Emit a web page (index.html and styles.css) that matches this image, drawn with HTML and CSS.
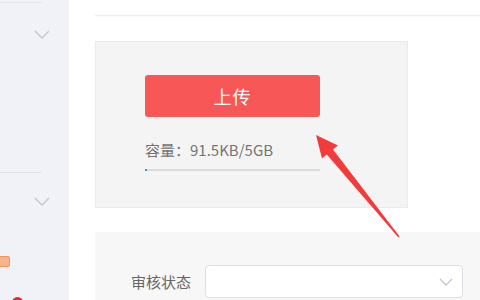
FILE: index.html
```html
<!DOCTYPE html>
<html lang="zh-CN">
<head>
<meta charset="utf-8">
<link rel="stylesheet" href="styles.css">
</head>
<body>
<div class="app">
  <aside class="sidebar">
    <div class="group">
      <div class="sep"></div>
      <div class="chev-row">
        <svg class="chev" viewBox="0 0 16 9" width="16" height="9"><path d="M1 1 L8 8 L15 1" fill="none" stroke="#c3c6cf" stroke-width="1.4"/></svg>
      </div>
    </div>
    <div class="group second">
      <div class="sep"></div>
      <div class="chev-row">
        <svg class="chev" viewBox="0 0 16 9" width="16" height="9"><path d="M1 1 L8 8 L15 1" fill="none" stroke="#c3c6cf" stroke-width="1.4"/></svg>
      </div>
    </div>
    <div class="badge"></div>
    <div class="dot"></div>
  </aside>
  <main class="main">
    <div class="topline"></div>
    <section class="upload-panel">
      <button class="upload-btn">上传</button>
      <div class="capacity">容量：91.5KB/5GB</div>
      <div class="progress"><div class="progress-fill" style="width:2px"></div></div>
    </section>
    <section class="filter-panel">
      <label class="filter-label">审核状态</label>
      <div class="select">
        <svg class="select-chev" viewBox="0 0 14 8" width="14" height="8"><path d="M1 1 L7 7 L13 1" fill="none" stroke="#c0c4cc" stroke-width="1.3"/></svg>
      </div>
    </section>
  </main>
  <svg class="annotation" viewBox="0 0 480 300" width="480" height="300">
    <polygon points="316,135 338,145.5 333,149.6 399.6,236.6 398.4,237.4 326.8,154.6 322,158.6" fill="#f23b3b"/>
  </svg>
</div>
</body>
</html>
```
FILE: styles.css
```css
* { box-sizing: border-box; }
html, body { margin: 0; padding: 0; }
body {
  width: 480px;
  height: 300px;
  overflow: hidden;
  background: #ffffff;
  font-family: "Noto Sans CJK SC", "Noto Sans", sans-serif;
}
.app {
  position: relative;
  display: flex;
  width: 480px;
  height: 300px;
}
.sidebar {
  width: 69px;
  flex: none;
  background: #f1f2f7;
  display: flex;
  flex-direction: column;
  padding-top: 2px;
  overflow: hidden;
}
.group {
  height: 170px;
  flex: none;
}
.group.second {
  height: 84px;
}
.sep {
  width: 42px;
  height: 1px;
  background: #e2e4ea;
}
.chev-row {
  padding-top: 27px;
  padding-left: 34px;
  height: 40px;
}
.group.second .chev-row {
  padding-top: 24px;
}
.chev { display: block; }
.badge {
  flex: none;
  width: 11px;
  height: 11px;
  margin-left: -1px;
  background: #f7b48c;
  border: 1.5px solid #f2915a;
  border-radius: 2px;
}
.dot {
  flex: none;
  width: 11px;
  height: 11px;
  margin-top: 30px;
  margin-left: 12px;
  background: #e8242f;
  border-radius: 50%;
}
.main {
  flex: 1;
  padding-left: 26px;
  display: flex;
  flex-direction: column;
}
.topline {
  flex: none;
  margin-top: 15px;
  height: 2px;
  background: #efefef;
  border-bottom: 1px solid #f8f8f8;
}
.upload-panel {
  flex: none;
  margin-top: 24px;
  width: 313px;
  height: 167px;
  background: #f4f4f4;
  border: 1px solid #ebebeb;
  padding: 33px 0 0 49px;
}
.upload-btn {
  display: block;
  width: 175px;
  height: 42px;
  border: none;
  border-radius: 3px;
  background: #f85757;
  color: #ffffff;
  font-family: "Noto Sans CJK SC", sans-serif;
  font-size: 18px;
  line-height: 42px;
  padding: 0;
  letter-spacing: 1px;
}
.capacity {
  margin-top: 24px;
  font-size: 15px;
  line-height: 18px;
  color: #747474;
}
.progress {
  margin-top: 10px;
  width: 175px;
  height: 2px;
  background: #dcdcdc;
}
.progress-fill {
  height: 2px;
  background: #3d8fd6;
}
.filter-panel {
  margin-top: 24px;
  flex: 1;
  background: #f7f7f7;
  display: flex;
  align-items: flex-start;
  padding: 32px 0 0 36px;
}
.filter-label {
  width: 74px;
  font-size: 15px;
  line-height: 36px;
  color: #666666;
}
.select {
  width: 258px;
  height: 33px;
  margin-top: 1px;
  background: #ffffff;
  border: 1px solid #dcdfe6;
  border-radius: 4px;
  display: flex;
  align-items: center;
  justify-content: flex-end;
  padding-right: 9px;
}
.select-chev { display: block; }
.annotation {
  position: absolute;
  left: 0;
  top: 0;
  pointer-events: none;
}
```
